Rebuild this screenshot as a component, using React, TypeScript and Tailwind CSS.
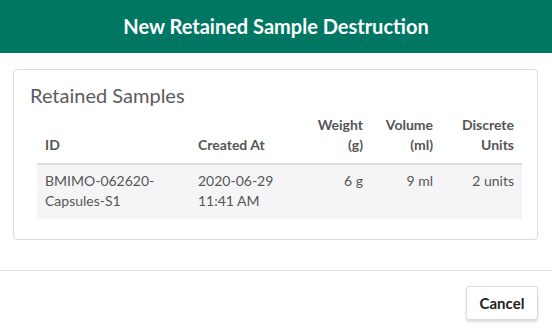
const rows = [
  { id: 'BMIMO-062620-Capsules-S1', created: '2020-06-29 11:41 AM', weight: '6 g', volume: '9 ml', units: '2 units' },
]

export default function App() {
  return (
    <div className="w-[552px] h-[333px] bg-white flex flex-col font-['Lato',sans-serif] text-[#555]">
      {/* Header */}
      <div className="h-[53px] shrink-0 bg-[#007762] flex items-center justify-center">
        <h1 className="text-white text-[20px] font-bold leading-none -mt-[1px]">New Retained Sample Destruction</h1>
      </div>

      {/* Body */}
      <div className="pt-4 pl-[13px] pr-[14px] pb-[30px] border-b border-[#e3e3e3]">
        <div className="border border-[#dcdcdc] rounded-[4px] pt-3 pl-4 pr-4 pb-5">
          <h2 className="text-[20px] leading-[26px] text-[#5c5c5c]">Retained Samples</h2>
          <table className="ml-[7px] mt-[7px] w-[485px] table-fixed border-collapse text-[14px] leading-[20px]">
            <colgroup>
              <col className="w-[153px]" />
              <col className="w-[118px]" />
              <col className="w-[63px]" />
              <col className="w-[70px]" />
              <col className="w-[81px]" />
            </colgroup>
            <thead>
              <tr className="border-b-2 border-[#dedede] font-bold text-[#555]">
                <th className="px-2 pb-2 text-left align-bottom">ID</th>
                <th className="px-2 pb-2 text-left align-bottom">Created At</th>
                <th className="px-2 pb-2 text-right align-bottom">Weight (g)</th>
                <th className="px-2 pb-2 text-right align-bottom">Volume (ml)</th>
                <th className="px-2 pb-2 text-right align-bottom">Discrete Units</th>
              </tr>
            </thead>
            <tbody>
              {rows.map((r) => (
                <tr key={r.id} className="bg-[#f5f5f7] align-top">
                  <td className="px-2 pt-[6px] pb-2 break-words">BMIMO-062620-<br />Capsules-S1</td>
                  <td className="px-2 pt-[6px] pb-2">{r.created}</td>
                  <td className="px-2 pt-[6px] pb-2 text-right">{r.weight}</td>
                  <td className="px-2 pt-[6px] pb-2 text-right">{r.volume}</td>
                  <td className="px-2 pt-[6px] pb-2 text-right">{r.units}</td>
                </tr>
              ))}
            </tbody>
          </table>
        </div>
      </div>

      {/* Footer */}
      <div className="flex justify-end pt-[15px] pr-[14px]">
        <button className="h-[34px] w-[72px] rounded-[3px] border border-[#dcdcdc] bg-white text-[15px] font-bold text-[#222] shadow-[0_2px_3px_rgba(0,0,0,0.15)]">
          Cancel
        </button>
      </div>
    </div>
  )
}
